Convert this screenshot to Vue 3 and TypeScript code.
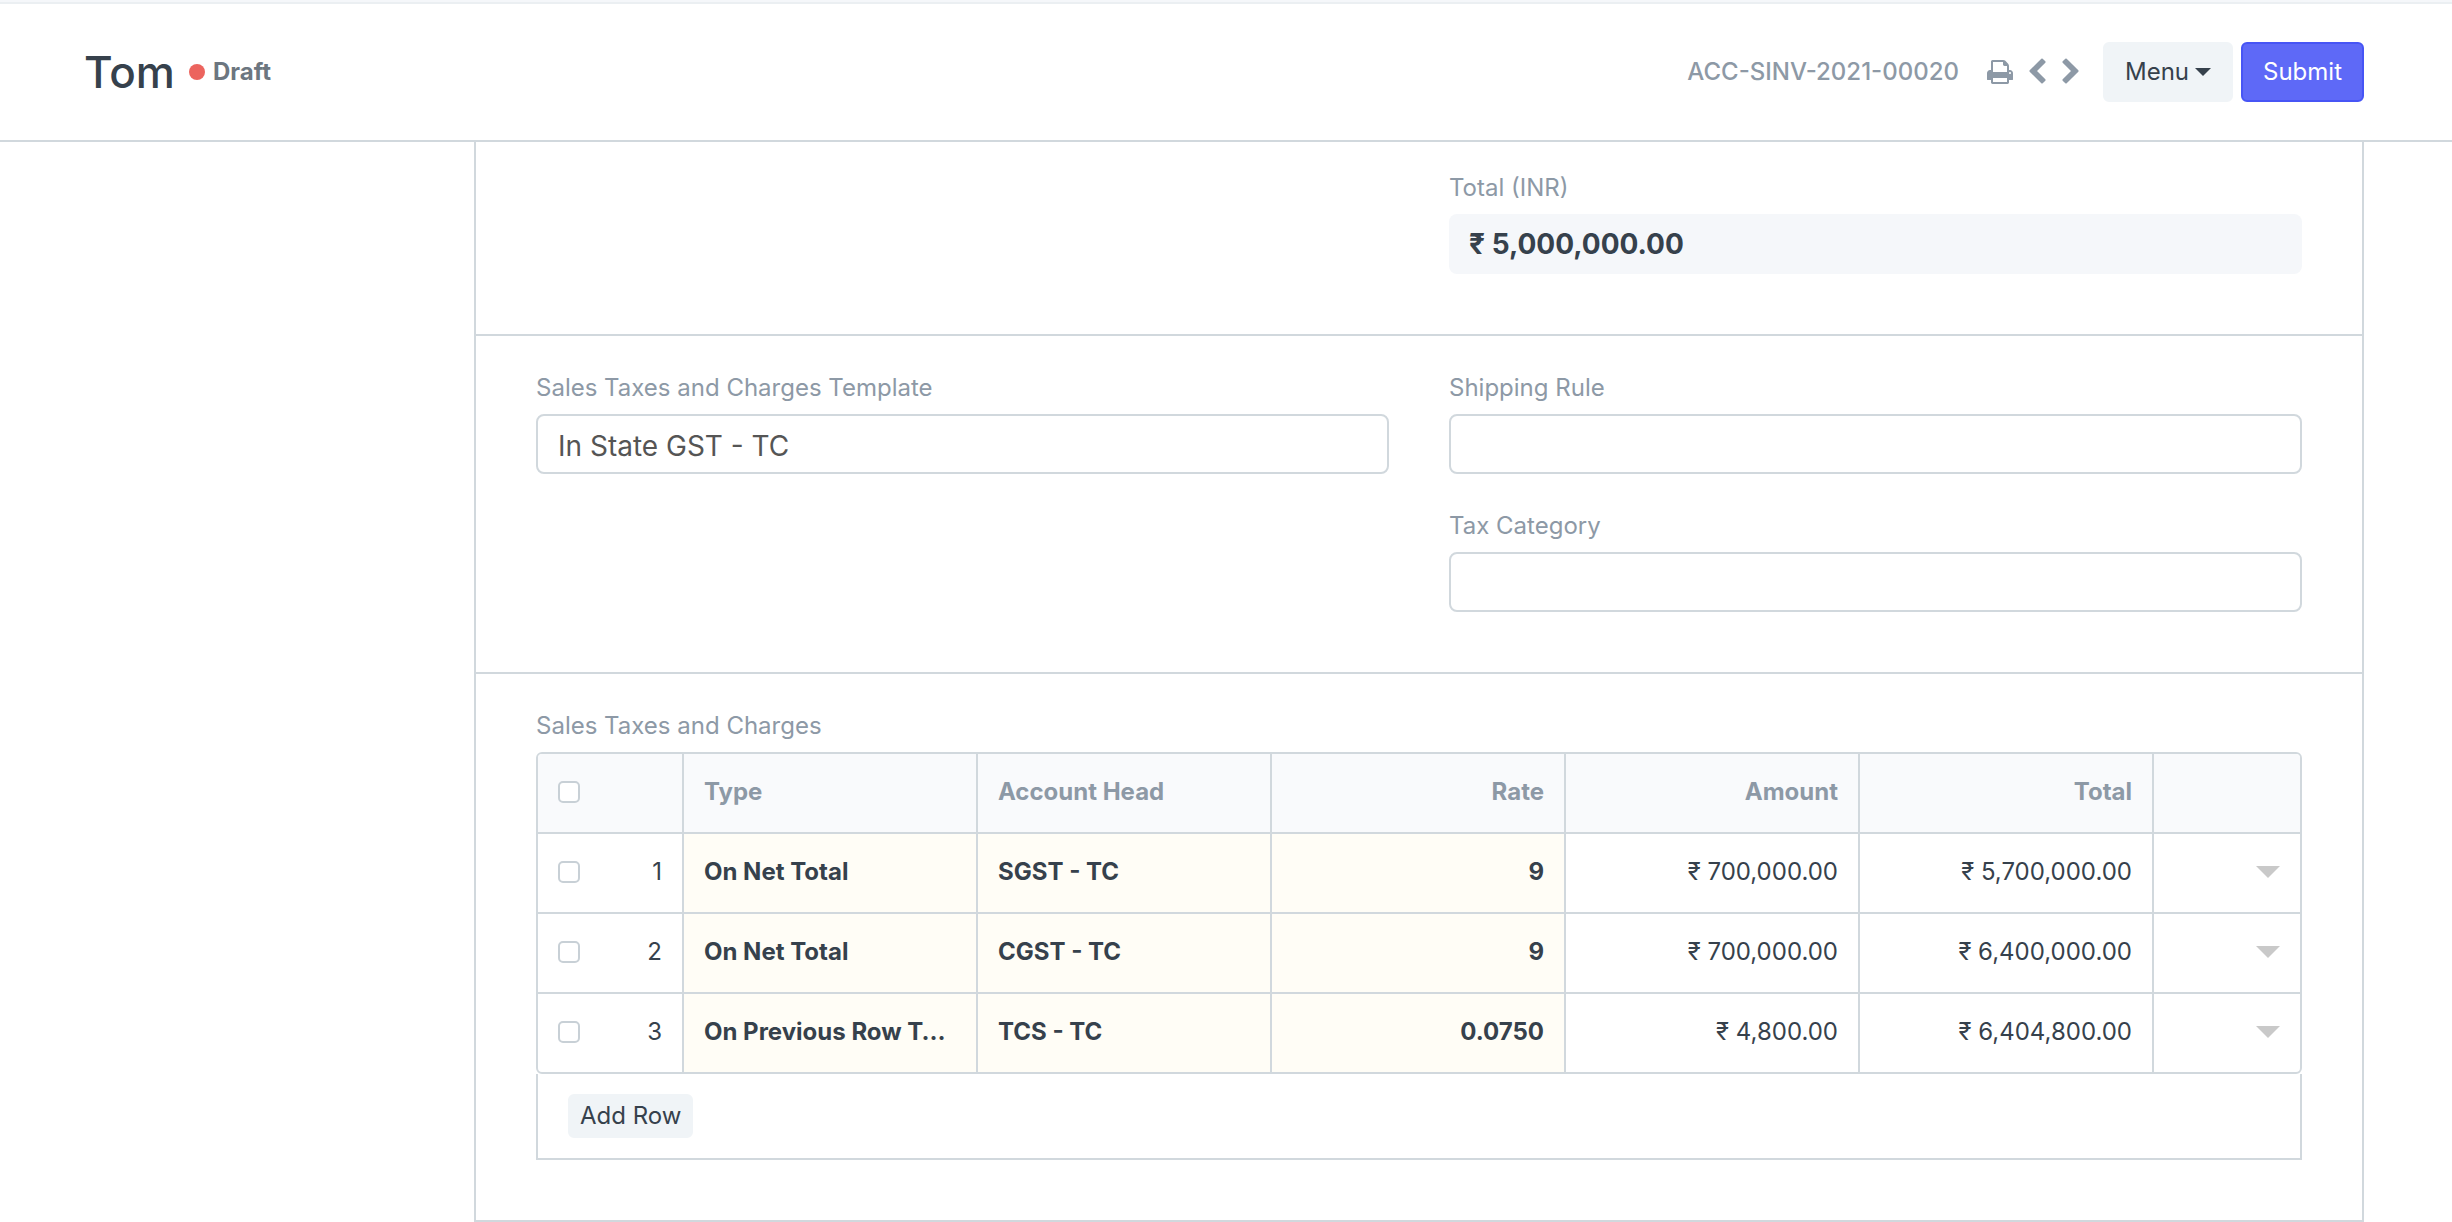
<script setup lang="ts">
import { ref } from 'vue'

interface TaxRow {
  type: string
  account: string
  rate: string
  amount: string
  total: string
  selected: boolean
}

const total = ref('₹ 5,000,000.00')
const template = ref('In State GST - TC')
const shippingRule = ref('')
const taxCategory = ref('')
const allSelected = ref(false)

const rows = ref<TaxRow[]>([
  { type: 'On Net Total', account: 'SGST - TC', rate: '9', amount: '₹ 700,000.00', total: '₹ 5,700,000.00', selected: false },
  { type: 'On Net Total', account: 'CGST - TC', rate: '9', amount: '₹ 700,000.00', total: '₹ 6,400,000.00', selected: false },
  { type: 'On Previous Row Total', account: 'TCS - TC', rate: '0.0750', amount: '₹ 4,800.00', total: '₹ 6,404,800.00', selected: false },
])

function toggleAll(): void {
  rows.value.forEach((row) => (row.selected = allSelected.value))
}

function addRow(): void {
  rows.value.push({ type: '', account: '', rate: '', amount: '', total: '', selected: false })
}
</script>

<template>
  <div class="page">
    <header class="page-head">
      <div class="title-area">
        <h1>Tom</h1>
        <span class="indicator">Draft</span>
      </div>
      <div class="actions">
        <span class="doc-name">ACC-SINV-2021-00020</span>
        <div class="icons">
          <button type="button" class="icon-btn" aria-label="Print">
            <svg width="26" height="28" viewBox="0 0 1664 1792"><path d="M384 1536h896v-256h-896v256zM384 896h896v-384h-160q-40 0-68-28t-28-68v-160h-640v640zM1536 960q0-26-19-45t-45-19-45 19-19 45 19 45 45 19 45-19 19-45zM1664 960v416q0 13-9.5 22.5t-22.5 9.5h-224v160q0 40-28 68t-68 28h-960q-40 0-68-28t-28-68v-160h-224q-13 0-22.5-9.5t-9.5-22.5v-416q0-79 56.5-135.5t135.5-56.5h64v-544q0-40 28-68t68-28h672q40 0 88 20t76 48l152 152q28 28 48 76t20 88v256h64q79 0 135.5 56.5t56.5 135.5z" /></svg>
          </button>
          <button type="button" class="icon-btn" aria-label="Previous">
            <svg width="20" height="28" viewBox="0 0 1280 1792"><path d="M1171 301l-531 531 531 531q19 19 19 45t-19 45l-166 166q-19 19-45 19t-45-19l-742-742q-19-19-19-45t19-45l742-742q19-19 45-19t45 19l166 166q19 19 19 45t-19 45z" /></svg>
          </button>
          <button type="button" class="icon-btn" aria-label="Next">
            <svg width="20" height="28" viewBox="0 0 1280 1792"><path d="M1107 877l-742 742q-19 19-45 19t-45-19l-166-166q-19-19-19-45t19-45l531-531-531-531q-19-19-19-45t19-45l166-166q19-19 45-19t45 19l742 742q19 19 19 45t-19 45z" /></svg>
          </button>
        </div>
        <button type="button" class="btn">Menu<span class="caret"></span></button>
        <button type="button" class="btn primary">Submit</button>
      </div>
    </header>

    <main class="form">
      <section class="section totals">
        <div class="columns">
          <div class="column"></div>
          <div class="column">
            <div class="field">
              <label for="total">Total (INR)</label>
              <input id="total" v-model="total" class="readonly" type="text" readonly />
            </div>
          </div>
        </div>
      </section>

      <section class="section">
        <div class="columns">
          <div class="column">
            <div class="field">
              <label for="template">Sales Taxes and Charges Template</label>
              <input id="template" v-model="template" type="text" />
            </div>
          </div>
          <div class="column">
            <div class="field">
              <label for="shipping">Shipping Rule</label>
              <input id="shipping" v-model="shippingRule" type="text" />
            </div>
            <div class="field">
              <label for="category">Tax Category</label>
              <input id="category" v-model="taxCategory" type="text" />
            </div>
          </div>
        </div>
      </section>

      <section class="section">
        <div id="taxes-label" class="table-label">Sales Taxes and Charges</div>
        <table aria-labelledby="taxes-label">
          <colgroup>
            <col class="narrow" />
            <col /><col /><col /><col /><col />
            <col class="narrow" />
          </colgroup>
          <thead>
            <tr>
              <th>
                <div class="select">
                  <input v-model="allSelected" type="checkbox" aria-label="Select all rows" @change="toggleAll" />
                </div>
              </th>
              <th>Type</th>
              <th>Account Head</th>
              <th class="num">Rate</th>
              <th class="num">Amount</th>
              <th class="num">Total</th>
              <th></th>
            </tr>
          </thead>
          <tbody>
            <tr v-for="(row, i) in rows" :key="i">
              <td>
                <div class="select">
                  <input v-model="row.selected" type="checkbox" :aria-label="`Select row ${i + 1}`" />
                  <span>{{ i + 1 }}</span>
                </div>
              </td>
              <td class="required">{{ row.type }}</td>
              <td class="required">{{ row.account }}</td>
              <td class="required num">{{ row.rate }}</td>
              <td class="num">{{ row.amount }}</td>
              <td class="num">{{ row.total }}</td>
              <td>
                <button type="button" class="open-row" :aria-label="`Open row ${i + 1}`"></button>
              </td>
            </tr>
          </tbody>
        </table>
        <div class="table-foot">
          <button type="button" class="btn small" @click="addRow">Add Row</button>
        </div>
      </section>
    </main>
  </div>
</template>

<style>
body {
  margin: 0;
  background: #fff;
}
</style>

<style scoped>
* {
  box-sizing: border-box;
}

.page {
  font-family: Inter, "Noto Sans", sans-serif;
  font-size: 24px;
  line-height: 36px;
  color: #36414c;
  border-top: 2px solid #f5f7fa;
}

button,
input {
  font: inherit;
  color: inherit;
  margin: 0;
}

.page-head {
  display: flex;
  align-items: center;
  justify-content: space-between;
  padding: 38px 88px 38px 84px;
  border-top: 2px solid #ebeff2;
  border-bottom: 2px solid #d1d8dd;
}

.title-area,
.actions,
.icons {
  display: flex;
  align-items: center;
}

.title-area {
  gap: 14px;
}

h1 {
  margin: 0;
  font-size: 44px;
  line-height: 60px;
  font-weight: 500;
}

.indicator {
  display: flex;
  align-items: center;
  gap: 8px;
  font-weight: 700;
  color: #6c7680;
}

.indicator::before {
  content: "";
  width: 16px;
  height: 16px;
  border-radius: 50%;
  background: #ec645e;
}

.actions {
  gap: 8px;
}

.doc-name {
  font-weight: 500;
  color: #8d99a6;
}

.icons {
  gap: 14px;
  margin: 0 14px 0 20px;
}

.icon-btn {
  display: flex;
  padding: 0;
  border: 0;
  background: none;
}

.icon-btn svg {
  fill: #8d99a6;
}

.btn {
  display: inline-flex;
  align-items: center;
  gap: 6px;
  padding: 10px 20px;
  border: 2px solid #f0f4f7;
  border-radius: 6px;
  background: #f0f4f7;
  color: #36414c;
}

.btn.primary {
  border-color: #4755f5;
  background: #5e69f7;
  color: #fff;
}

.btn.small {
  padding: 2px 10px;
}

.caret {
  border: 8px solid transparent;
  border-top-color: currentColor;
  border-bottom: 0;
}

.form {
  margin: 0 88px 0 474px;
  border: 2px solid #d1d8dd;
  border-top: 0;
}

.section {
  padding: 36px 60px 60px;
}

.section.totals {
  padding-top: 30px;
}

.section + .section {
  border-top: 2px solid #d1d8dd;
}

.columns {
  display: grid;
  grid-template-columns: 1fr 1fr;
  gap: 60px;
}

.column {
  display: flex;
  flex-direction: column;
  gap: 36px;
}

.field {
  display: flex;
  flex-direction: column;
  gap: 10px;
}

label,
.table-label {
  line-height: 32px;
  color: #8d99a6;
}

.table-label {
  margin-bottom: 10px;
}

.field input {
  width: 100%;
  height: 60px;
  padding: 4px 20px 0;
  border: 2px solid #d1d8dd;
  border-radius: 8px;
  background: #fff;
  color: #555;
  font-size: 28px;
}

.field input.readonly {
  padding: 0 20px;
  border: 0;
  background: #f5f7fa;
  color: #36414c;
  font-weight: 700;
}

table {
  width: 100%;
  table-layout: fixed;
  border: 2px solid #d1d8dd;
  border-radius: 6px;
  border-spacing: 0;
  overflow: hidden;
}

.narrow {
  width: 146px;
}

th,
td {
  padding: 20px 20px 22px;
  border-right: 2px solid #d1d8dd;
  border-bottom: 2px solid #d1d8dd;
  text-align: left;
  overflow: hidden;
  text-overflow: ellipsis;
  white-space: nowrap;
}

th {
  background: #f9fafc;
  color: #8d99a6;
  font-weight: 700;
}

th:last-child,
td:last-child {
  border-right: 0;
}

tbody tr:last-child td {
  border-bottom: 0;
}

.required {
  background: #fffdf6;
  font-weight: 700;
}

.num {
  text-align: right;
}

.select {
  display: flex;
  align-items: center;
  justify-content: space-between;
  height: 36px;
}

.select input {
  appearance: none;
  width: 22px;
  height: 22px;
  border: 2px solid #c8d0d6;
  border-radius: 5px;
  background: #fff;
}

.select input:checked {
  background: #8d99a6;
}

.open-row {
  display: block;
  width: 24px;
  height: 12px;
  margin-left: auto;
  padding: 0;
  border: 0;
  background: #c9c9c9;
  clip-path: polygon(0 0, 100% 0, 50% 100%);
}

.table-foot {
  display: flex;
  padding: 20px 30px;
  border: 2px solid #d1d8dd;
  border-top: 0;
}
</style>
